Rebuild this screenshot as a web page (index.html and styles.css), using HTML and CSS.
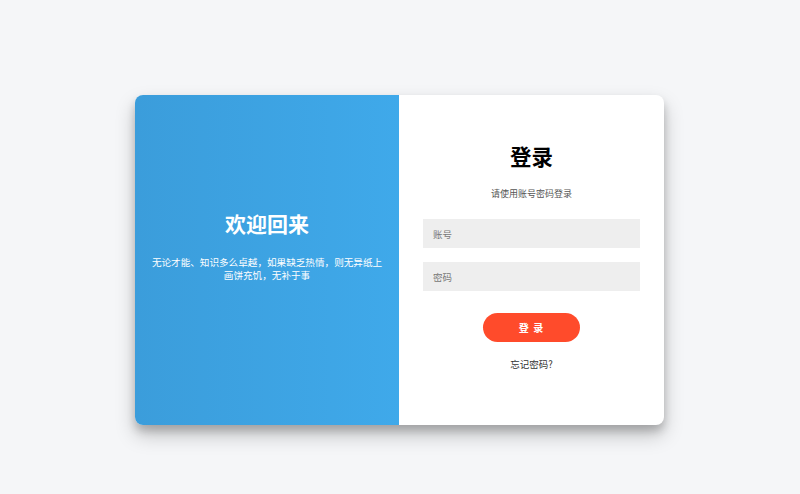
FILE: index.html
```html
<!DOCTYPE html>
<html lang="zh">
<head>
<meta charset="utf-8">
<link rel="stylesheet" href="styles.css">
</head>
<body>
<div class="card">
  <div class="welcome">
    <h1 class="welcome-title">欢迎回来</h1>
    <p class="welcome-text">无论才能、知识多么卓越，如果缺乏热情，则无异纸上画饼充饥，无补于事</p>
  </div>
  <form class="login">
    <h2 class="login-title">登录</h2>
    <p class="login-sub">请使用账号密码登录</p>
    <input class="field" type="text" placeholder="账号">
    <input class="field" type="password" placeholder="密码">
    <button class="btn" type="button">登 录</button>
    <a class="forgot">忘记密码?</a>
  </form>
</div>
</body>
</html>
```
FILE: styles.css
```css
html, body {
  margin: 0;
  height: 100%;
}
body {
  background: #f5f6f8;
  font-family: "Noto Sans CJK SC", "Liberation Sans", sans-serif;
  display: flex;
  justify-content: center;
  align-items: flex-start;
  padding-top: 95px;
  padding-right: 1px;
  box-sizing: border-box;
}
.card {
  width: 529px;
  height: 330px;
  border-radius: 8px;
  overflow: hidden;
  display: flex;
  background: #fff;
  box-shadow: 0 10px 20px rgba(0,0,0,0.22), 0 6px 8px rgba(0,0,0,0.18);
}
.welcome {
  width: 264px;
  background: linear-gradient(to right, #3b9ddb, #3fa9ea);
  color: #fff;
  display: flex;
  flex-direction: column;
  align-items: center;
  padding: 113px 14px 0;
  box-sizing: border-box;
  text-align: center;
}
.welcome-title {
  margin: 0;
  font-size: 21px;
  font-weight: 700;
  line-height: 30px;
}
.welcome-text {
  margin: 18px 0 0;
  font-size: 9.6px;
  line-height: 12.5px;
}
.login {
  flex: 1;
  display: flex;
  flex-direction: column;
  align-items: center;
  padding: 46px 24px 0;
  box-sizing: border-box;
}
.login-title {
  margin: 0;
  font-size: 21.5px;
  font-weight: 700;
  line-height: 30px;
  color: #000;
}
.login-sub {
  margin: 16px 0 0;
  font-size: 9px;
  line-height: 13px;
  color: #555;
}
.field {
  width: 100%;
  height: 29px;
  border: none;
  background: #eee;
  margin-top: 14px;
  padding: 0 10px;
  box-sizing: border-box;
  font-family: inherit;
  font-size: 9.5px;
  outline: none;
}
.login-sub + .field {
  margin-top: 19px;
}
.field::placeholder {
  color: #777;
}
.btn {
  margin-top: 22px;
  width: 97px;
  height: 29px;
  border: none;
  border-radius: 15px;
  background: #ff4b2b;
  color: #fff;
  font-family: inherit;
  font-size: 10px;
  font-weight: 700;
  letter-spacing: 1px;
}
.forgot {
  margin-top: 15px;
  font-size: 9.5px;
  line-height: 14px;
  color: #333;
}
```
